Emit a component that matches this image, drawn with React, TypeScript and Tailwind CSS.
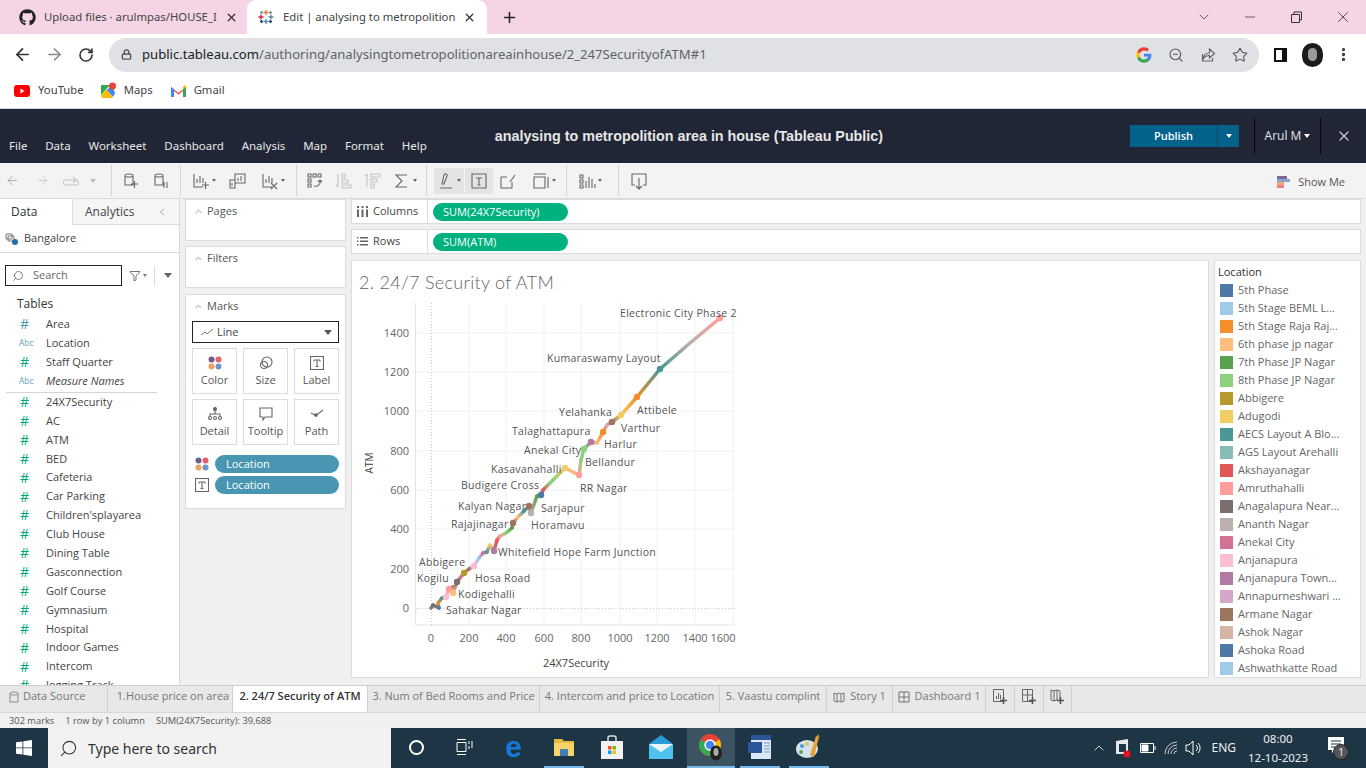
import React from "react";
import { FaGithub } from "react-icons/fa";
import {
  ArrowLeft,
  ArrowRight,
  RotateCw,
  Lock,
  Search,
  ZoomOut,
  Star,
  X,
  Plus,
  ChevronDown,
  ChevronUp,
  ChevronLeft,
  Minus,
  MoreVertical,
} from "lucide-react";

const FIELDS = [
  ["#", "Area", "b"],
  ["Abc", "Location", ""],
  ["#", "Staff Quarter", ""],
  ["Abc", "Measure Names", "i"],
  ["#", "24X7Security", ""],
  ["#", "AC", ""],
  ["#", "ATM", ""],
  ["#", "BED", ""],
  ["#", "Cafeteria", ""],
  ["#", "Car Parking", ""],
  ["#", "Children'splayarea", ""],
  ["#", "Club House", ""],
  ["#", "Dining Table", ""],
  ["#", "Gasconnection", ""],
  ["#", "Golf Course", ""],
  ["#", "Gymnasium", ""],
  ["#", "Hospital", ""],
  ["#", "Indoor Games", ""],
  ["#", "Intercom", ""],
  ["#", "Jogging Track", ""],
];

const LEGEND: [string, string][] = [
  ["#4e79a7", "5th Phase"],
  ["#a0cbe8", "5th Stage BEML L..."],
  ["#f28e2b", "5th Stage Raja Raj..."],
  ["#ffbe7d", "6th phase jp nagar"],
  ["#59a14f", "7th Phase JP Nagar"],
  ["#8cd17d", "8th Phase JP Nagar"],
  ["#b6992d", "Abbigere"],
  ["#f1ce63", "Adugodi"],
  ["#499894", "AECS Layout A Blo..."],
  ["#86bcb6", "AGS Layout Arehalli"],
  ["#e15759", "Akshayanagar"],
  ["#ff9d9a", "Amruthahalli"],
  ["#79706e", "Anagalapura Near..."],
  ["#bab0ac", "Ananth Nagar"],
  ["#d37295", "Anekal City"],
  ["#fabfd2", "Anjanapura"],
  ["#b07aa1", "Anjanapura Town..."],
  ["#d4a6c8", "Annapurneshwari ..."],
  ["#9d7660", "Armane Nagar"],
  ["#d7b5a6", "Ashok Nagar"],
  ["#4e79a7", "Ashoka Road"],
  ["#a0cbe8", "Ashwathkatte Road"],
];

// page coordinates of the line, x, y, colour, dot
const LINE: [number, number, string, boolean?][] = [
  [431, 608, "#9d7660"],
  [433, 605, "#79706e"],
  [439, 608, "#4e79a7"],
  [438, 603, "#f28e2b"],
  [442, 598, "#499894"],
  [446, 597, "#fabfd2", true],
  [449, 589, "#ff9d9a", true],
  [453, 587, "#e15759"],
  [453, 593, "#ffbe7d", true],
  [457, 582, "#79706e", true],
  [460, 578, "#d37295"],
  [464, 573, "#b6992d", true],
  [469, 569, "#9d7660"],
  [474, 566, "#fabfd2", true],
  [479, 558, "#a0cbe8"],
  [483, 553, "#d37295"],
  [487, 552, "#499894"],
  [490, 545, "#f1ce63"],
  [494, 551, "#b07aa1", true],
  [497, 540, "#e15759"],
  [500, 536, "#ff9d9a"],
  [506, 533, "#8cd17d"],
  [512, 528, "#59a14f"],
  [513, 523, "#9d7660", true],
  [518, 517, "#ffbe7d"],
  [524, 511, "#499894"],
  [529, 506, "#9d7660", true],
  [531, 513, "#bab0ac", true],
  [537, 496, "#59a14f"],
  [541, 495, "#4e79a7", true],
  [543, 490, "#e15759"],
  [550, 483, "#8cd17d"],
  [553, 480, "#8cd17d"],
  [565, 468, "#f1ce63", true],
  [579, 475, "#ff9d9a", true],
  [581, 460, "#8cd17d"],
  [584, 449, "#8cd17d", true],
  [591, 442, "#b07aa1", true],
  [597, 443, "#ffbe7d"],
  [603, 432, "#f28e2b", true],
  [607, 425, "#d4a6c8"],
  [612, 422, "#9d7660", true],
  [621, 415, "#f1ce63", true],
  [637, 397, "#f28e2b", true],
  [660, 369, "#499894", true],
  [690, 343, "#bab0ac"],
  [720, 318, "#ff9d9a", true],
];

const LABELS: [string, number, number][] = [
  ["Electronic City Phase 2", 620, 313],
  ["Kumaraswamy Layout", 547, 358],
  ["Yelahanka", 559, 412],
  ["Attibele", 637, 410],
  ["Varthur", 621, 428],
  ["Talaghattapura", 512, 431],
  ["Harlur", 604, 444],
  ["Anekal City", 524, 450],
  ["Bellandur", 585, 462],
  ["Kasavanahalli", 491, 469],
  ["RR Nagar", 580, 488],
  ["Budigere Cross", 461, 485],
  ["Kalyan Nagar", 458, 506],
  ["Sarjapur", 541, 508],
  ["Rajajinagar", 451, 524],
  ["Horamavu", 531, 525],
  ["Whitefield Hope Farm Junction", 498, 552],
  ["Abbigere", 419, 562],
  ["Kogilu", 417, 578],
  ["Hosa Road", 475, 578],
  ["Kodigehalli", 458, 594],
  ["Sahakar Nagar", 446, 610],
];

const Y_TICKS: [string, number][] = [
  ["0", 608],
  ["200", 569],
  ["400", 529],
  ["600", 490],
  ["800", 451],
  ["1000", 411],
  ["1200", 372],
  ["1400", 333],
];
const X_TICKS: [string, number, number][] = [
  ["0", 431, 431],
  ["200", 469, 469],
  ["400", 506, 506],
  ["600", 544, 544],
  ["800", 581, 581],
  ["1000", 620, 620],
  ["1200", 657, 657],
  ["1400", 695, 695],
  ["1600", 733, 723],
];

const ICON = "fill-none stroke-[#666] stroke-[1.1]";

const TableauLogo = ({ size = 16 }: { size?: number }) => (
  <svg width={size} height={size} viewBox="0 0 16 16" className="stroke-[1.3]">
    <path d="M8 1v5M5.5 3.500h5" stroke="#e8762b" />
    <path d="M8 10v5M5.500 12.500h5" stroke="#5b879b" />
    <path d="M3 5.500v5M.5 8h5" stroke="#c72035" />
    <path d="M13 5.500v5M10.500 8h5" stroke="#59879b" />
    <path d="M12.500 2v3M11 3.500h3M3.500 2v3M2 3.500h3" stroke="#7099a6" />
    <path d="M12.500 11v3M11 12.500h3M3.500 11v3M2 12.500h3" stroke="#1f457e" />
  </svg>
);

const GoogleG = () => (
  <svg width="16" height="16" viewBox="0 0 24 24">
    <path fill="#4285F4" d="M23 12.300c0-.8-.1-1.600-.2-2.300H12v4.400h6.200c-.3 1.400-1.100 2.600-2.300 3.400v2.800h3.700c2.100-2 3.400-4.900 3.400-8.300z" />
    <path fill="#34A853" d="M12 23.500c3.100 0 5.700-1 7.600-2.800l-3.700-2.900c-1 .7-2.300 1.100-3.900 1.100-3 0-5.500-2-6.400-4.700H1.800v2.900C3.700 20.900 7.500 23.500 12 23.500z" />
    <path fill="#FBBC05" d="M5.600 14.200c-.5-1.400-.5-3 0-4.400V6.900H1.800c-1.600 3.200-1.600 7 0 10.200l3.800-2.900z" />
    <path fill="#EA4335" d="M12 5.100c1.700 0 3.200.6 4.400 1.700l3.300-3.300C17.700 1.600 15.100.5 12 .5 7.500.5 3.700 3.100 1.800 6.900l3.800 2.900C6.500 7.100 9 5.100 12 5.100z" />
  </svg>
);

const ColorDots = () => (
  <svg width="14" height="14" viewBox="0 0 14 14">
    <circle cx="3.500" cy="3.500" r="3" fill="#6f5b8e" />
    <circle cx="10.500" cy="3.500" r="3" fill="#e8606b" />
    <circle cx="3.500" cy="10.500" r="3" fill="#f0a060" />
    <circle cx="10.500" cy="10.500" r="3" fill="#6f94c8" />
  </svg>
);

const LabelT = () => (
  <svg width="14" height="14" viewBox="0 0 14 14" className={ICON}>
    <rect x=".5" y=".5" width="13" height="13" />
    <path d="M4 4h6M7 4v6.500M5.500 10.500h3M4 4v1.500M10 4v1.500" />
  </svg>
);

const ToolIcon = ({ d, caret, dim }: { d: string; caret?: boolean; dim?: boolean }) => (
  <span className="flex items-center gap-[2px]">
    <svg
      width="18"
      height="18"
      viewBox="0 0 18 18"
      className={dim ? "fill-none stroke-[#c4c4c4] stroke-[1.1]" : ICON}
    >
      <path d={d} />
    </svg>
    {caret && <span className="w-0 h-0 border-x-[2.5px] border-x-transparent border-t-[3px] border-t-[#666]" />}
  </span>
);

const DATA_CAN = "M3 3.500c0-2 8-2 8 0v9.500H3zM3 3.500c0 2 8 2 8 0";
const CHART = "M2 2v13h9M5 11V7M8 11V4M11 11V6";

const ToolGroup = ({ w, children }: { w: string; children: React.ReactNode }) => (
  <div className={`${w} h-[31px] border-r border-[#d4d4d4] flex items-center justify-around px-1`}>{children}</div>
);

const MarkBtn = ({ label, children }: { label: string; children: React.ReactNode }) => (
  <div className="w-[45px] h-[46px] border border-[#dcdcdc] flex flex-col items-center justify-center gap-[3px] text-[#555]">
    <div className="h-[14px] flex items-center">{children}</div>
    <span className="leading-[14px]">{label}</span>
  </div>
);

const Card = ({ title, className, children }: { title: string; className: string; children?: React.ReactNode }) => (
  <div className={`bg-white border border-[#dcdcdc] ${className}`}>
    <div className="h-[22px] pl-[7px] flex items-center gap-[3px] text-[#555]">
      <ChevronUp size={11} strokeWidth={1.2} />
      <span>{title}</span>
    </div>
    {children}
  </div>
);

const Shelf = ({ label, icon, pill }: { label: string; icon: React.ReactNode; pill: string }) => (
  <div className="h-[25px] bg-white border border-[#dcdcdc] flex items-center">
    <div className="w-[76px] h-full border-r border-[#dcdcdc] pl-[5px] flex items-center gap-[5px] text-[#444]">
      {icon}
      <span>{label}</span>
    </div>
    <div className="ml-[5px] w-[135px] h-[18px] rounded-full bg-[#00b180] text-white pl-[10px] leading-[18px]">{pill}</div>
  </div>
);

const SheetTab = ({ w, children, active }: { w: string; children: React.ReactNode; active?: boolean }) => (
  <div
    className={`${w} h-[26px] pb-[5px] border-r border-[#cfcfcf] flex items-center justify-center gap-[5px] whitespace-nowrap ${
      active ? "bg-white text-[#333] font-semibold" : "text-[#777]"
    }`}
  >
    {children}
  </div>
);

const AddSheet = ({ d }: { d: string }) => (
  <svg width="17" height="17" viewBox="0 0 17 17" className="fill-none stroke-[#666]">
    <path d={d} />
    <path d="M11.500 9v7M8 12.500h7" strokeWidth="1.600" stroke="#555" />
  </svg>
);

const Chart = () => {
  return (
    <svg width="400" height="380" viewBox="352 295 400 380" className="block font-['Open_Sans',sans-serif]">
      <defs>
        {LINE.slice(1).map((p, i) => (
          <linearGradient
            key={i}
            id={`seg${i}`}
            gradientUnits="userSpaceOnUse"
            x1={LINE[i][0]}
            y1={LINE[i][1]}
            x2={p[0]}
            y2={p[1]}
          >
            <stop offset="0" stopColor={LINE[i][2]} />
            <stop offset="1" stopColor={p[2]} />
          </linearGradient>
        ))}
      </defs>
      {Y_TICKS.slice(1).map(([t, y]) => (
        <line key={t} x1="416" x2="735" y1={y} y2={y} stroke="#f1f1f1" />
      ))}
      {X_TICKS.slice(1).map(([t, x]) => (
        <line key={t} x1={x} x2={x} y1="303" y2="625" stroke="#f1f1f1" />
      ))}
      <line x1="415.500" x2="415.500" y1="303" y2="625" stroke="#e4e4e4" />
      <line x1="416" x2="735" y1="625" y2="625" stroke="#e4e4e4" />
      <line x1="416" x2="735" y1="608.500" y2="608.500" stroke="#c8c8c8" strokeDasharray="1 2" />
      <line x1="431.500" x2="431.500" y1="303" y2="625" stroke="#c8c8c8" strokeDasharray="1 2" />

      {LINE.slice(1).map((p, i) => (
        <line
          key={i}
          x1={LINE[i][0]}
          y1={LINE[i][1]}
          x2={p[0]}
          y2={p[1]}
          stroke={`url(#seg${i})`}
          strokeWidth="3.500"
          strokeLinecap="round"
        />
      ))}
      {LINE.filter((p) => p[3]).map((p, i) => (
        <circle key={i} cx={p[0]} cy={p[1]} r="3.200" fill={p[2]} />
      ))}

      {Y_TICKS.map(([t, y]) => (
        <text key={t} x="409" y={y + 4} textAnchor="end" fontSize="11" fill="#666">
          {t}
        </text>
      ))}
      {X_TICKS.map(([t, x, lx]) => (
        <text key={t + x} x={lx} y="642" textAnchor="middle" fontSize="11" fill="#666">
          {t}
        </text>
      ))}
      <text x="576" y="667" textAnchor="middle" fontSize="11" fill="#444">
        24X7Security
      </text>
      <text transform="translate(373 463) rotate(-90)" textAnchor="middle" fontSize="10" fill="#444">
        ATM
      </text>
      {LABELS.map(([t, x, y]) => (
        <text key={t} x={x} y={y + 4} fontSize="10.500" letterSpacing=".3" fill="#555">
          {t}
        </text>
      ))}
    </svg>
  );
};

const TaskIcon = ({ w, on, children }: { w: string; on?: boolean; children: React.ReactNode }) => (
  <div className={`${w} h-[40px] flex items-center justify-center border-b-[2px] ${on ? "border-[#76b9ed]" : "border-transparent"}`}>
    {children}
  </div>
);

export default function App() {
  return (
    <div className="w-[1366px] h-[768px] overflow-hidden flex flex-col bg-white font-['Open_Sans',sans-serif] text-[11px]">
      {/* browser tabs */}
      <div className="h-[34px] shrink-0 bg-[#f5d5e5] flex items-end pl-[8px] pr-[14px] font-['Noto_Sans',sans-serif] text-[11.300px] text-[#444]">
        <div className="w-[239px] h-[34px] flex items-center pl-[11px]">
          <FaGithub size={17} className="text-[#222] shrink-0" />
          <span className="ml-[8px] w-[172px] whitespace-nowrap">Upload files · arulmpas/HOUSE_I</span>
          <X size={13} strokeWidth={2.4} className="ml-[9px] text-[#333]" />
        </div>
        <div className="w-[240px] h-[34px] bg-white rounded-t-[9px] flex items-center pl-[11px]">
          <TableauLogo />
          <span className="ml-[9px] w-[170px] whitespace-nowrap">Edit | analysing to metropolition</span>
          <X size={13} strokeWidth={2.4} className="ml-[10px] text-[#333]" />
        </div>
        <div className="h-[34px] flex items-center ml-[14px]">
          <Plus size={17} strokeWidth={2.2} className="text-[#222]" />
        </div>
        <div className="ml-auto h-[34px] flex items-center gap-[30px] text-[#333]">
          <ChevronDown size={16} strokeWidth={1.1} />
          <Minus size={16} strokeWidth={1.1} />
          <svg width="16" height="16" viewBox="0 0 16 16" className="fill-none stroke-[#333]">
            <path d="M3.500 5.500h8v8h-8zM6 5.500V3h7.500v8h-2" />
          </svg>
          <X size={18} strokeWidth={1.1} />
        </div>
      </div>

      {/* address bar */}
      <div className="h-[41px] shrink-0 flex items-center pl-[13px] pr-[14px] font-['Noto_Sans',sans-serif]">
        <ArrowLeft size={19} strokeWidth={2.2} className="text-[#333]" />
        <ArrowRight size={19} strokeWidth={2} className="ml-[13px] text-[#888]" />
        <RotateCw size={16} strokeWidth={2.4} className="ml-[14px] text-[#333]" />
        <div className="ml-[15px] w-[1150px] h-[34px] rounded-full bg-[#dfe1e5] flex items-center pl-[12px] pr-[10px]">
          <Lock size={11} strokeWidth={3} className="text-[#555]" />
          <span className="ml-[10px] text-[13.100px] text-[#5f6368] whitespace-nowrap">
            <span className="text-[#202124]">public.tableau.com</span>/authoring/analysingtometropolitionareainhouse/2_247SecurityofATM#1
          </span>
          <div className="ml-auto mr-[1px] flex items-center gap-[16px] text-[#555]">
            <GoogleG />
            <ZoomOut size={16} strokeWidth={1.6} />
            <svg width="16" height="16" viewBox="0 0 16 16" className="fill-none stroke-[#666] stroke-[1.2]">
              <path d="M2.500 7v7h10v-3M9.500 2l5 4.500-5 4.500V8.500c-3 0-5 1-6.500 4 .5-4 2.500-6.500 6.500-6.500z" />
            </svg>
            <Star size={16} strokeWidth={1.6} />
          </div>
        </div>
        <div className="ml-[15px] w-[13px] h-[14px] border-[2px] border-[#111] border-r-[5px]" />
        <div className="ml-[15px] w-[21px] h-[24px] rounded-full bg-[#1b1b1b] flex items-center justify-center">
          <div className="w-[9px] h-[13px] rounded-full bg-[#999]" />
        </div>
        <MoreVertical size={17} strokeWidth={2.6} className="ml-[12px] text-[#333]" />
      </div>

      {/* bookmarks */}
      <div className="h-[34px] shrink-0 pb-[2px] flex items-center pl-[14px] border-b border-[#d6d6d6] font-['Noto_Sans',sans-serif] text-[11.300px] text-[#444]">
        <svg width="16" height="12" viewBox="0 0 16 12">
          <rect width="16" height="12" rx="3" fill="#f00" />
          <path d="M6.500 3.500v5l4-2.500z" fill="#fff" />
        </svg>
        <span className="ml-[8px]">YouTube</span>
        <svg width="15" height="17" viewBox="0 0 15 17" className="ml-[17px]">
          <path d="M0 3h9l-9 10z" fill="#34a853" />
          <path d="M0 13l6-6 6 9H1z" fill="#fbbc05" />
          <path d="M6 8l5-5 3 8-2 4z" fill="#4285f4" />
          <circle cx="11.500" cy="4" r="3.500" fill="#ea4335" />
        </svg>
        <span className="ml-[8px]">Maps</span>
        <svg width="15" height="12" viewBox="0 0 15 12" className="ml-[18px]">
          <path d="M0 2l7.500 6L15 2v9a1 1 0 0 1-1 1h-2V6L7.500 9.500 3 6v6H1a1 1 0 0 1-1-1z" fill="#ea4335" />
          <path d="M0 11V2l3 2.500V12H1a1 1 0 0 1-1-1z" fill="#4285f4" />
          <path d="M15 11V2l-3 2.500V12h2a1 1 0 0 0 1-1z" fill="#34a853" />
          <path d="M12 4.500L15 2a1 1 0 0 0-2-1l-1 1z" fill="#fbbc05" />
        </svg>
        <span className="ml-[8px]">Gmail</span>
      </div>

      {/* tableau header */}
      <div className="h-[54px] shrink-0 bg-[#212637] text-[#e6e6e6] flex items-center pl-[9px] pr-[14px]">
        <div className="self-end h-[34px] flex items-center gap-[17.800px] text-[11.500px] font-['Noto_Sans',sans-serif]">
          <span>File</span>
          <span>Data</span>
          <span>Worksheet</span>
          <span>Dashboard</span>
          <span>Analysis</span>
          <span>Map</span>
          <span>Format</span>
          <span>Help</span>
        </div>
        <div className="ml-[68px] pt-[2px] text-[14.300px] font-bold font-['Liberation_Sans',sans-serif] whitespace-nowrap">
          analysing to metropolition area in house (Tableau Public)
        </div>
        <div className="ml-auto flex items-center h-[36px]">
          <div className="w-[109px] h-[22px] bg-[#03628c] rounded-[1px] flex text-white font-semibold">
            <span className="w-[87px] text-center leading-[22px]">Publish</span>
            <span className="flex-1 border-l border-[#21425c] flex items-center justify-center">
              <span className="w-0 h-0 border-x-[3.500px] border-x-transparent border-t-[4px] border-t-white" />
            </span>
          </div>
          <div className="ml-[15px] h-[36px] w-[67px] border-x border-[#05060a] flex items-center justify-center gap-[3px] text-[12px]">
            Arul M
            <span className="w-0 h-0 border-x-[3.500px] border-x-transparent border-t-[4px] border-t-white" />
          </div>
          <X size={16} strokeWidth={1.8} className="ml-[15px] text-[#ccc]" />
        </div>
      </div>

      {/* toolbar */}
      <div className="h-[36px] shrink-0 bg-[#f3f3f3] border-b border-[#dadada] flex items-center">
        <div className="w-[112px] h-[31px] border-r border-[#d4d4d4] flex items-center pl-[5px]">
          <ArrowLeft size={15} strokeWidth={1} className="text-[#888]" />
          <ArrowRight size={15} strokeWidth={1} className="ml-[15px] text-[#bbb]" />
          <span className="ml-[13px]">
            <ToolIcon dim d="M2 8h11a2 2 0 0 1 0 5H4a2 2 0 0 1-2-5M10 5l3 3-3 3" />
          </span>
          <span className="ml-[9px] w-0 h-0 border-x-[3px] border-x-transparent border-t-[4px] border-t-[#bbb]" />
        </div>
        <ToolGroup w="w-[69px]">
          <ToolIcon d={`${DATA_CAN}M9 12h7M12.500 9v7`} />
          <ToolIcon d={`${DATA_CAN}M12 10v6M15 10v6`} />
        </ToolGroup>
        <ToolGroup w="w-[116px]">
          <ToolIcon d={`${CHART}M10 13h7M13.500 10v7`} caret />
          <ToolIcon d="M6 2h10v9H6zM1 8h5v8H1zM9 9V6M12 9V4M3 14v-3" />
          <ToolIcon d={`${CHART}M10 11l6 6M16 11l-6 6`} caret />
        </ToolGroup>
        <ToolGroup w="w-[130px]">
          <ToolIcon d="M2 2h3v3H2zM7 2h3v3H7zM12 2h3v3h-3zM2 7h3v3H2zM2 12h3v3H2zM8 14c4 1 7-2 6-6M14 8l-2 2M14 8l2 2" />
          <ToolIcon dim d="M3 2v13M3 15l-2-2M7 2h3v4H7zM7 8h6v3H7zM7 13h9v3H7z" />
          <ToolIcon dim d="M3 15V2M3 2L1 4M7 2h9v3H7zM7 7h6v3H7zM7 12h3v4H7z" />
          <ToolIcon d="M14 3H3l6 6-6 6h11" caret />
        </ToolGroup>
        <div className="w-[140px] h-[31px] border-r border-[#d4d4d4] flex items-center pl-[7px]">
          <div className="w-[30px] h-[26px] bg-[#e4e4e4] flex items-center justify-center">
            <ToolIcon d="M3 16h12M5 12l2-9c1-2 4-1 3 1l-3 8z" caret />
          </div>
          <div className="ml-[1px] w-[28px] h-[26px] bg-[#e4e4e4] flex items-center justify-center">
            <ToolIcon d="M2 2h14v14H2zM6 6h6M9 6v7M7.500 13h3" />
          </div>
          <div className="ml-[1px] w-[28px] flex justify-center">
            <ToolIcon d="M2 5h6M2 5v11h11v-6M11 10l5-7" />
          </div>
          <div className="ml-[5px] w-[34px] flex justify-center">
            <ToolIcon d="M2 2h12M2 5h11v11H2zM16 5v11" caret />
          </div>
        </div>
        <div className="w-[52px] h-[31px] border-r border-[#d4d4d4] flex items-center pl-[11px]">
          <ToolIcon d="M2 3h3v3H2zM2 8h3v3H2zM2 13h3v3H2zM8 16V9M11 16V5M14 16v-9M17 16v-4" caret />
        </div>
        <div className="w-[40px] flex justify-center">
          <ToolIcon d="M5 13H2V2h14v11h-3M9 6v11M9 17l-3-3M9 17l3-3" />
        </div>
        <div className="ml-auto mt-[3px] pr-[21px] flex items-center gap-[8px] text-[#555]">
          <span className="flex flex-col">
            <span className="w-[10px] h-[3px] bg-[#7a6b96]" />
            <span className="w-[13px] h-[3px] bg-[#88a6cc]" />
            <span className="w-[7px] h-[3px] bg-[#f0a878]" />
            <span className="w-[7px] h-[3px] bg-[#ee7f85]" />
          </span>
          Show Me
        </div>
      </div>

      {/* workspace */}
      <div className="h-[486px] shrink-0 bg-[#f0f0f0] flex">
        {/* data pane */}
        <div className="w-[180px] bg-white border-r border-[#d8d8d8] flex flex-col overflow-hidden text-[#444]">
          <div className="h-[26px] flex shrink-0">
            <div className="w-[72px] pl-[11px] flex items-center text-[12px] text-[#333]">Data</div>
            <div className="flex-1 bg-[#f5f5f5] border-l border-b border-[#dcdcdc] flex items-center pl-[12px] text-[12px] text-[#444]">
              Analytics
              <ChevronLeft size={12} strokeWidth={1} className="ml-[22px]" />
            </div>
          </div>
          <div className="h-[28px] shrink-0 border-b border-[#dcdcdc] flex items-center pl-[5px] gap-[5px]">
            <svg width="14" height="14" viewBox="0 0 14 14" className="fill-none stroke-[#777]">
              <path d="M1 2h6v5H1zM3 4h6v5H3z" />
              <circle cx="10" cy="10" r="3" fill="#1f6fa8" stroke="none" />
            </svg>
            Bangalore
          </div>
          <div className="shrink-0 mt-[12px] pl-[5px] flex items-center">
            <div className="w-[117px] h-[21px] border border-[#222] flex items-center pl-[6px] gap-[9px] text-[#666]">
              <Search size={12} strokeWidth={1.2} className="-scale-x-100 text-[#333]" />
              Search
            </div>
            <svg width="12" height="12" viewBox="0 0 12 12" className="ml-[7px] fill-none stroke-[#777]">
              <path d="M1 1.500h10L7 6v4L5 11V6z" />
            </svg>
            <span className="ml-[2px] w-0 h-0 border-x-[2.500px] border-x-transparent border-t-[3px] border-t-[#777]" />
            <span className="ml-[7px] w-px h-[20px] bg-[#dcdcdc]" />
            <span className="ml-[9px] w-0 h-0 border-x-[4px] border-x-transparent border-t-[5px] border-t-[#666]" />
          </div>
          <div className="shrink-0 mt-[9px] pl-[17px] h-[18px] leading-[18px] text-[12px] text-[#333]">Tables</div>
          <div className="mt-[2px] pl-[6px] text-[11px]">
            {FIELDS.map(([kind, name, style]) => (
              <div
                key={name}
                className={`flex items-center ${style === "i" ? "h-[21px] pb-px border-b border-[#d4d4d4] w-[151px] italic" : "h-[18.900px]"}`}
              >
                {kind === "#" ? (
                  <span className={`w-[40px] pl-[14px] text-[14px] leading-none ${style === "b" ? "text-[#4996b2]" : "text-[#00a878]"}`}>#</span>
                ) : (
                  <span className="w-[40px] pl-[13px] text-[8.500px] not-italic text-[#6b9fb3]">Abc</span>
                )}
                <span>{name}</span>
              </div>
            ))}
          </div>
        </div>

        {/* cards */}
        <div className="w-[171px] px-[5px] flex flex-col">
          <Card title="Pages" className="h-[42px]" />
          <Card title="Filters" className="h-[42px] mt-[5px]" />
          <Card title="Marks" className="h-[215px] mt-[6px]">
            <div className="px-[6px] pt-[4px]">
              <div className="h-[22px] border border-[#222] flex items-center pl-[7px] gap-[3px] text-[#444]">
                <svg width="14" height="10" viewBox="0 0 14 10" className="fill-none stroke-[#777]">
                  <path d="M1 8l4-3 2 2 6-5" />
                </svg>
                Line
                <span className="ml-auto mr-[6px] w-0 h-0 border-x-[4px] border-x-transparent border-t-[5px] border-t-[#555]" />
              </div>
              <div className="mt-[5px] grid grid-cols-3 gap-x-[6px] gap-y-[5px]">
                <MarkBtn label="Color">
                  <ColorDots />
                </MarkBtn>
                <MarkBtn label="Size">
                  <svg width="14" height="14" viewBox="0 0 14 14" className={ICON}>
                    <circle cx="8" cy="6" r="5" />
                    <circle cx="5" cy="9" r="3.500" />
                  </svg>
                </MarkBtn>
                <MarkBtn label="Label">
                  <LabelT />
                </MarkBtn>
                <MarkBtn label="Detail">
                  <svg width="14" height="14" viewBox="0 0 14 14" className={ICON}>
                    <circle cx="7" cy="2" r="1.500" fill="#666" />
                    <path d="M7 3.500V7M2 9V7h10v2" />
                    <circle cx="2" cy="11" r="1.500" />
                    <circle cx="7" cy="11" r="1.500" />
                    <circle cx="12" cy="11" r="1.500" />
                  </svg>
                </MarkBtn>
                <MarkBtn label="Tooltip">
                  <svg width="14" height="14" viewBox="0 0 14 14" className={ICON}>
                    <path d="M1 1h12v9H6l-2 3v-3H1z" />
                  </svg>
                </MarkBtn>
                <MarkBtn label="Path">
                  <svg width="14" height="14" viewBox="0 0 14 14" className={ICON}>
                    <path d="M1 6l4 2 3-1 5-4" />
                    <circle cx="6" cy="8" r="1.300" fill="#666" />
                  </svg>
                </MarkBtn>
              </div>
              <div className="mt-[10px] pl-[3px] flex flex-col gap-[3px]">
                <div className="flex items-center gap-[6px]">
                  <ColorDots />
                  <div className="flex-1 h-[18px] rounded-full bg-[#4996b2] text-white pl-[11px] leading-[18px]">Location</div>
                </div>
                <div className="flex items-center gap-[6px]">
                  <LabelT />
                  <div className="flex-1 h-[18px] rounded-full bg-[#4996b2] text-white pl-[11px] leading-[18px]">Location</div>
                </div>
              </div>
            </div>
          </Card>
        </div>

        {/* shelves and view */}
        <div className="w-[1010px] flex flex-col">
          <Shelf
            label="Columns"
            pill="SUM(24X7Security)"
            icon={
              <svg width="11" height="11" viewBox="0 0 11 11" className="fill-[#666]">
                <path d="M0 0h2v2H0zM4.500 0h2v2h-2zM9 0h2v2H9zM0 3.500h2V11H0zM4.500 3.500h2V11h-2zM9 3.500h2V11H9z" />
              </svg>
            }
          />
          <div className="mt-[5px]">
            <Shelf
              label="Rows"
              pill="SUM(ATM)"
              icon={
                <svg width="11" height="9" viewBox="0 0 11 9" className="fill-[#666]">
                  <path d="M0 0h1.500v1.500H0zM3 0h8v1.500H3zM0 3.500h1.500V5H0zM3 3.500h8V5H3zM0 7h1.500v1.500H0zM3 7h8v1.500H3z" />
                </svg>
              }
            />
          </div>
          <div className="mt-[6px] flex gap-[5px]">
            <div className="w-[858px] h-[418px] bg-white border border-[#dcdcdc] overflow-hidden">
              <div className="h-[34px] pl-[7px] pt-[7px] text-[18px] leading-[28px] text-[#666] font-light font-['Lato',sans-serif] tracking-[.3px]">
                2. 24/7 Security of ATM
              </div>
              <Chart />
            </div>
            <div className="w-[147px] h-[418px] bg-white border border-[#dcdcdc] overflow-hidden pl-[3px] pt-[2px]">
              <div className="h-[17px] leading-[17px] text-[#333]">Location</div>
              <div className="mt-[1px]">
                {LEGEND.map(([c, t], i) => (
                  <div key={i} className="h-[18px] flex items-center pl-[2px] gap-[5px] text-[#666] whitespace-nowrap">
                    <span className="w-[13px] h-[13px] shrink-0" style={{ backgroundColor: c }} />
                    {t}
                  </div>
                ))}
              </div>
            </div>
          </div>
        </div>
      </div>

      {/* sheet tabs */}
      <div className="h-[27px] shrink-0 bg-[#e8e8e8] border-t border-[#cfcfcf] flex text-[#777]">
        <div className="w-[108px] h-[26px] pb-[5px] border-r border-[#cfcfcf] flex items-center pl-[9px] gap-[4px] whitespace-nowrap">
          <svg width="10" height="12" viewBox="0 0 10 12" className="fill-none stroke-[#888]">
            <path d="M1 2.500c0-2 8-2 8 0V11H1zM1 2.500c0 2 8 2 8 0" />
          </svg>
          Data Source
        </div>
        <SheetTab w="w-[125px] pl-[6px]">1.House price on area</SheetTab>
        <SheetTab w="w-[135px]" active>
          2. 24/7 Security of ATM
        </SheetTab>
        <SheetTab w="w-[172px]">3. Num of Bed Rooms and Price</SheetTab>
        <SheetTab w="w-[180px]">4. Intercom and price to Location</SheetTab>
        <SheetTab w="w-[107px]">5. Vaastu complint</SheetTab>
        <SheetTab w="w-[66px]">
          <svg width="12" height="12" viewBox="0 0 12 12" className="fill-none stroke-[#777]">
            <path d="M1 2l3 1 2-1 2 1 3-1v8l-3 1-2-1-2 1-3-1zM4 3v8M8 3v8" />
          </svg>
          Story 1
        </SheetTab>
        <SheetTab w="w-[93px]">
          <svg width="12" height="12" viewBox="0 0 12 12" className="fill-none stroke-[#777]">
            <path d="M1 1h10v10H1zM1 6h10M6 1v10" />
          </svg>
          Dashboard 1
        </SheetTab>
        <SheetTab w="w-[29px]">
          <AddSheet d="M1.500 1.500h10v12h-10zM4.500 11V8M6.500 11V5M8.500 11V7" />
        </SheetTab>
        <SheetTab w="w-[29px]">
          <AddSheet d="M1.500 1.500h10v12h-10zM1.500 7h10M6.500 1.500v12" />
        </SheetTab>
        <SheetTab w="w-[28px]">
          <AddSheet d="M2 2l3 1 3-1 3 1v10l-3-1-3 1-3-1zM5 3v10M8 2v10" />
        </SheetTab>
      </div>

      {/* status bar */}
      <div className="h-[16px] shrink-0 bg-[#f0f0f0] border-t border-[#d8d8d8] flex items-center pl-[9px] gap-[11px] text-[9.300px] text-[#555] leading-none">
        <span>302 marks</span>
        <span>1 row by 1 column</span>
        <span>SUM(24X7Security): 39,688</span>
      </div>

      {/* windows taskbar */}
      <div className="h-[40px] shrink-0 bg-[#1d3545] flex items-center text-white font-['Noto_Sans',sans-serif]">
        <div className="w-[48px] flex justify-center">
          <svg width="16" height="16" viewBox="0 0 16 16" className="fill-white">
            <path d="M0 2.300l6.500-.9V7.500H0zM7.300 1.300L16 0v7.500H7.300zM0 8.300h6.500v6.200L0 13.700zM7.300 8.300H16V16l-8.700-1.200z" />
          </svg>
        </div>
        <div className="w-[343px] h-[40px] bg-[#f2f2f2] flex items-center pl-[11px] gap-[10px] text-[14px] text-[#333]">
          <Search size={19} strokeWidth={1.3} className="-scale-x-100" />
          Type here to search
        </div>
        <TaskIcon w="w-[50px]">
          <span className="w-[15px] h-[15px] rounded-full border-[2px] border-white" />
        </TaskIcon>
        <TaskIcon w="w-[46px]">
          <svg width="18" height="18" viewBox="0 0 18 18" className="fill-none stroke-white">
            <path d="M2 4.500h9v9H2zM2 1.500h9M2 16.500h9M14 3v3M14 8v3M17 3v7" />
          </svg>
        </TaskIcon>
        <TaskIcon w="w-[53px]">
          <span className="text-[30px] leading-none font-bold text-[#1579d6] font-['Liberation_Sans',sans-serif]">e</span>
        </TaskIcon>
        <div className="ml-[4px]">
          <TaskIcon w="w-[40px]" on>
            <svg width="22" height="20" viewBox="0 0 22 20">
              <path d="M1 2h8l2 2h10v4H1z" fill="#e9b93f" />
              <path d="M1 6h20v13H1z" fill="#f6d36b" />
              <path d="M7 12h8v7H7z" fill="#3f7fb8" />
            </svg>
          </TaskIcon>
        </div>
        <div className="ml-[4px]">
          <TaskIcon w="w-[48px]">
            <svg width="22" height="24" viewBox="0 0 22 24">
              <path d="M7 7V3a2 2 0 0 1 2-2h4a2 2 0 0 1 2 2v4" fill="none" stroke="#ddd" strokeWidth="1.500" />
              <path d="M0 6h22v18H0z" fill="#f2f2f2" />
              <path d="M7 11h3.500v3.500H7z" fill="#f25022" />
              <path d="M11.500 11H15v3.500h-3.500z" fill="#7fba00" />
              <path d="M7 15.500h3.500V19H7z" fill="#00a4ef" />
              <path d="M11.500 15.500H15V19h-3.500z" fill="#ffb900" />
            </svg>
          </TaskIcon>
        </div>
        <TaskIcon w="w-[50px]">
          <svg width="24" height="24" viewBox="0 0 24 24">
            <path d="M12 0l12 9v15H0V9z" fill="#2b9ad8" />
            <path d="M0 9h24v15H0z" fill="#51c1ee" />
            <path d="M0 9l12 8 12-8" fill="#e8f6fc" />
          </svg>
        </TaskIcon>
        <div className="ml-[1px] w-[48px] h-[40px] bg-[#3c5362] flex items-center justify-center border-b-[2px] border-[#76b9ed]">
          <svg width="26" height="28" viewBox="0 0 26 28">
            <circle cx="12" cy="12" r="11" fill="#ea4335" />
            <path d="M12 12L2.500 6.500A11 11 0 0 0 12 23z" fill="#34a853" />
            <path d="M12 12l9.500-5.500A11 11 0 0 1 12 23z" fill="#fbbc05" />
            <circle cx="12" cy="12" r="5" fill="#4285f4" stroke="#fff" strokeWidth="1.500" />
            <ellipse cx="18" cy="20" rx="6" ry="7.500" fill="#222" />
            <ellipse cx="18" cy="19" rx="2.500" ry="4" fill="#aaa" />
          </svg>
        </div>
        <div className="ml-[5px]">
          <TaskIcon w="w-[40px]" on>
            <svg width="24" height="26" viewBox="0 0 24 26">
              <path d="M3 1h20v24H3z" fill="#dce8f5" />
              <path d="M3 1h20v5H3z" fill="#2a5699" />
              <path d="M0 8h14v11H0z" fill="#2a5699" />
              <path d="M16 9h6M16 12h6M16 15h6M16 18h6" stroke="#7d9cc9" />
            </svg>
          </TaskIcon>
        </div>
        <div className="ml-[9px]">
          <TaskIcon w="w-[40px]" on>
            <svg width="26" height="28" viewBox="0 0 26 28">
              <ellipse cx="11" cy="16" rx="11" ry="9" fill="#d5e4ec" />
              <circle cx="6" cy="13" r="2" fill="#4a9bd8" />
              <circle cx="11" cy="11" r="2" fill="#e8c23c" />
              <circle cx="5" cy="19" r="2" fill="#58a94a" />
              <path d="M14 22l6-19 3 1-5 20z" fill="#e9a23a" />
              <path d="M20 4l2-3 2 3z" fill="#bc7a2a" />
            </svg>
          </TaskIcon>
        </div>
        <div className="ml-auto flex items-center h-[40px] text-[#eee]">
          <ChevronUp size={16} strokeWidth={1.3} />
          <svg width="20" height="20" viewBox="0 0 20 20" className="ml-[6px]">
            <path d="M3 3l12-2v15H3z" fill="#e8e8e8" />
            <path d="M6 6h7v8H6z" fill="#1d3545" />
            <circle cx="14" cy="16" r="3.500" fill="#e81123" />
          </svg>
          <svg width="16" height="10" viewBox="0 0 16 10" className="ml-[7px] fill-none stroke-white">
            <path d="M.5 .5h13v9H.5zM15 3v4" />
            <path d="M2 2h6v6H2z" fill="#fff" />
          </svg>
          <svg width="16" height="14" viewBox="0 0 16 14" className="ml-[8px] fill-none stroke-[#ccc]">
            <path d="M1 13a12 12 0 0 1 12-12M4 13a9 9 0 0 1 9-9M7 13a6 6 0 0 1 6-6M10 13a3 3 0 0 1 3-3" />
          </svg>
          <svg width="18" height="16" viewBox="0 0 18 16" className="ml-[5px] fill-none stroke-white">
            <path d="M1 5h3l4-4v14l-4-4H1zM11 5a4 4 0 0 1 0 6M13 3a7 7 0 0 1 0 10" />
          </svg>
          <span className="ml-[8px] text-[12px]">ENG</span>
          <div className="ml-[11px] w-[62px] flex flex-col items-center text-[11.500px] whitespace-nowrap">
            <span className="leading-[20px]">08:00</span>
            <span className="leading-[18px]">12-10-2023</span>
          </div>
          <div className="relative ml-[18px] mr-[17px] w-[22px] h-[24px]">
            <svg width="18" height="18" viewBox="0 0 18 18" className="fill-white">
              <path d="M1 1h16v13H8l-3 3v-3H1z" />
              <path d="M4 5h10M4 8h10M4 11h7" stroke="#1d3545" />
            </svg>
            <span className="absolute right-0 bottom-0 w-[16px] h-[16px] rounded-full bg-[#555] border border-[#222] text-center text-[10px] leading-[14px]">1</span>
          </div>
        </div>
      </div>
    </div>
  );
}
